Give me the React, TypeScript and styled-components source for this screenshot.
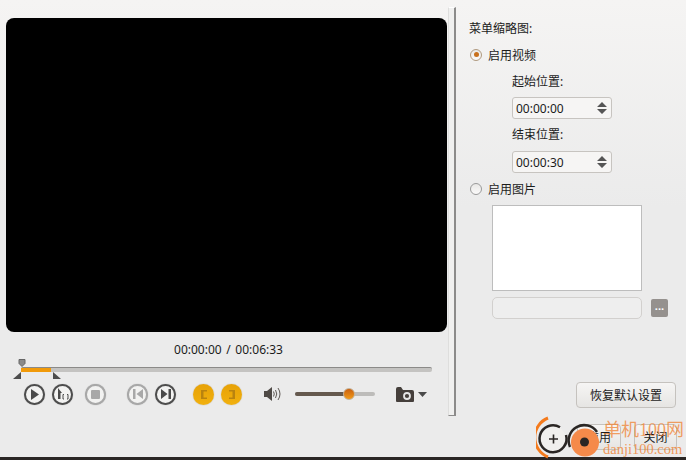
import React from 'react';
import styled, { createGlobalStyle } from 'styled-components';

const GlobalStyle = createGlobalStyle`
html, body {
  margin: 0;
  padding: 0;
  background: #ebebeb;
}
`;

const Page = styled.div`
  position: relative;
  width: 686px;
  height: 460px;
  overflow: hidden;
  background: linear-gradient(#f5f4f3, #ebebeb 45%);
  font-family: "Noto Sans", "Noto Sans CJK SC", sans-serif;
  font-size: 12px;
  color: #1c1c1c;
`;

const Main = styled.div`
  display: flex;
  height: 416px;
`;

const LeftPane = styled.div`
  width: 448px;
  padding: 18px 0 0 6px;
  box-sizing: border-box;
  flex-shrink: 0;
`;

const Video = styled.div`
  width: 441px;
  height: 314px;
  background: #000;
  border-radius: 8px;
`;

const TimeText = styled.div`
  height: 17px;
  margin-top: 9px;
  padding-left: 3px;
  text-align: center;
  line-height: 17px;
  word-spacing: 1.5px;
`;

const Track = styled.div`
  position: relative;
  height: 5px;
  width: 411px;
  margin: 9px 0 0 15px;
  background: #c4c3c1;
  border-top: 1px solid #8b8a88;
  border-radius: 2px;
  box-sizing: border-box;
`;

const TrackFill = styled.div`
  width: 30px;
  height: 4px;
  background: #f19a0a;
`;

const Marker = styled.svg<{ $top: number; $left: number }>`
  position: absolute;
  top: ${p => p.$top}px;
  left: ${p => p.$left}px;
`;

const Controls = styled.div`
  display: flex;
  align-items: center;
  height: 22px;
  margin: 11px 0 0 18px;
`;

const Round = styled.div<{ $off?: boolean; $gap?: number }>`
  width: 21px;
  height: 21px;
  margin-left: ${p => p.$gap ?? 0}px;
  border-radius: 50%;
  box-sizing: border-box;
  border: 2px solid ${p => (p.$off ? '#a8a8a8' : '#4d4d4d')};
  box-shadow: 0 0 1px rgba(0, 0, 0, 0.35);
  background: #f2f2f1;
  display: flex;
  align-items: center;
  justify-content: center;
  flex-shrink: 0;
`;

const GoldButton = styled.div<{ $gap: number }>`
  width: 21px;
  height: 21px;
  margin-left: ${p => p.$gap}px;
  border-radius: 50%;
  background: linear-gradient(#e7a207, #f1b00e);
  box-shadow: 0 0 1px rgba(120, 80, 0, 0.6);
  display: flex;
  align-items: center;
  justify-content: center;
  flex-shrink: 0;
  color: #b9830f;
`;

const Glyph = styled.svg<{ $ml?: number }>`
  margin-left: ${p => p.$ml ?? 0}px;
  flex-shrink: 0;
`;

const Volume = styled.div`
  position: relative;
  width: 80px;
  height: 4px;
  margin-left: 13px;
  background: #bdbcba;
  border-radius: 2px;
  flex-shrink: 0;
`;

const VolumeFill = styled.div`
  width: 50px;
  height: 4px;
  background: #65594e;
  border-radius: 2px;
`;

const Knob = styled.div`
  position: absolute;
  top: -4px;
  left: 48px;
  width: 12px;
  height: 12px;
  border-radius: 50%;
  background: linear-gradient(#c9600f, #f29a18);
  border: 1px solid #c4b49c;
  box-sizing: border-box;
`;

const Divider = styled.div`
  width: 8px;
  height: 409px;
  margin-top: 7px;
  box-sizing: border-box;
  background: #f0f0ef;
  border-top: 1px solid #fff;
  border-left: 1px solid #dededd;
  border-right: 2px solid #8c8b8a;
  border-bottom: 1px solid #8c8b8a;
  flex-shrink: 0;
`;

const RightPane = styled.div`
  flex: 1;
  padding: 20px 0 0 13px;
`;

const Label = styled.div`
  height: 17px;
  line-height: 17px;
`;

const RadioRow = styled.div<{ $mt: number }>`
  display: flex;
  align-items: center;
  gap: 6px;
  height: 17px;
  margin-top: ${p => p.$mt}px;
  margin-left: 1px;
`;

const Radio = styled.div<{ $on?: boolean }>`
  width: 12px;
  height: 12px;
  box-sizing: border-box;
  border-radius: 50%;
  border: 1px solid ${p => (p.$on ? '#b09a80' : '#9a9a9a')};
  background: linear-gradient(#e9e8e6, #fbfafa);
  display: flex;
  align-items: center;
  justify-content: center;
  &::after {
    content: '';
    display: ${p => (p.$on ? 'block' : 'none')};
    width: 5px;
    height: 5px;
    border-radius: 50%;
    background: #c8701c;
  }
`;

const Field = styled.div`
  margin-left: 43px;
`;

const FieldLabel = styled.div<{ $mt: number }>`
  height: 17px;
  line-height: 17px;
  margin-top: ${p => p.$mt}px;
`;

const Spin = styled.div<{ $mt: number }>`
  display: flex;
  align-items: center;
  justify-content: space-between;
  width: 100px;
  height: 22px;
  margin-top: ${p => p.$mt}px;
  padding: 0 4px 0 3px;
  box-sizing: border-box;
  border: 1px solid #c7c4c0;
  border-radius: 3px;
  background: #f6f5f4;
`;

const ImageBox = styled.div`
  width: 150px;
  height: 86px;
  margin: 8px 0 0 23px;
  background: #fff;
  border: 1px solid #bdbdbd;
  box-sizing: border-box;
`;

const PathRow = styled.div`
  display: flex;
  align-items: center;
  gap: 9px;
  margin: 6px 0 0 23px;
`;

const PathInput = styled.div`
  width: 150px;
  height: 22px;
  border: 1px solid #d2d0ce;
  border-radius: 5px;
  background: #eeeeee;
  box-sizing: border-box;
`;

const DotsButton = styled.div`
  width: 17px;
  height: 18px;
  border-radius: 2px;
  background: #95918e;
  color: #fff;
  font-size: 11px;
  font-weight: bold;
  line-height: 14px;
  text-align: center;
`;

const Button = styled.div<{ $w: number }>`
  display: flex;
  align-items: center;
  justify-content: center;
  width: ${p => p.$w}px;
  height: 26px;
  border: 1px solid #c5c2be;
  border-radius: 4px;
  background: linear-gradient(#f6f5f4, #e6e5e3);
  box-sizing: border-box;
`;

const RestoreRow = styled.div`
  display: flex;
  justify-content: flex-end;
  margin: 63px 10px 0 0;
`;

const Footer = styled.div`
  display: flex;
  justify-content: flex-end;
  gap: 13px;
  margin-top: 8px;
  padding-right: 9px;
`;

const BottomEdge = styled.div`
  position: absolute;
  left: 0;
  right: 0;
  bottom: 0;
  height: 3px;
  background: #2a2624;
`;

const WatermarkLogo = styled.svg`
  position: absolute;
  left: 536px;
  top: 414px;
`;

const WatermarkTitle = styled.div`
  position: absolute;
  left: 603px;
  top: 418px;
  font-family: "Liberation Serif", "Noto Sans CJK SC", serif;
  font-size: 18px;
  line-height: 24px;
  color: rgba(240, 130, 50, 0.75);
  white-space: nowrap;
`;

const WatermarkSite = styled.div`
  position: absolute;
  left: 603px;
  top: 441px;
  font-family: "Liberation Serif", serif;
  font-size: 14.5px;
  line-height: 17px;
  color: rgba(240, 130, 50, 0.8);
  white-space: nowrap;
`;

const Updown = () => (
  <svg width="10" height="12" viewBox="0 0 10 12">
    <path d="M5 0l5 5H0zM0 7h10l-5 5z" fill="#555" />
  </svg>
);

const Dark = '#4a4a4a';
const Off = '#a8a8a8';

export default function App() {
  return (
    <Page>
      <GlobalStyle />
      <Main>
        <LeftPane>
          <Video />
          <TimeText>00:00:00 / 00:06:33</TimeText>
          <Track>
            <TrackFill />
            <Marker $left={-3} $top={-9} width="8" height="8" viewBox="0 0 8 8">
              <path d="M1 0.500h6v4L4 7.500 1 4.500z" fill="#8a8a8a" stroke="#666" />
            </Marker>
            <Marker $left={-8} $top={4} width="8" height="7" viewBox="0 0 8 7">
              <path d="M8 0v7H0z" fill="#4d4d4d" />
            </Marker>
            <Marker $left={32} $top={4} width="8" height="7" viewBox="0 0 8 7">
              <path d="M0 0v7h8z" fill="#4d4d4d" />
            </Marker>
          </Track>
          <Controls>
            <Round>
              <svg width="8" height="11" viewBox="0 0 8 11">
                <path d="M0 0l8 5.500L0 11z" fill={Dark} />
              </svg>
            </Round>
            <Round $gap={7}>
              <svg width="12" height="12" viewBox="0 0 12 12">
                <path d="M1 0l4 5H3.500v6H1z" fill={Dark} />
                <path d="M7 6.500H6v4.500h1M10 6.500h1v4.500h-1" fill="none" stroke={Dark} />
              </svg>
            </Round>
            <Round $off $gap={12}>
              <svg width="9" height="9" viewBox="0 0 9 9">
                <rect width="9" height="9" rx="1" fill={Off} />
              </svg>
            </Round>
            <Round $off $gap={21}>
              <svg width="10" height="10" viewBox="0 0 10 10">
                <path d="M0 0h2.500v10H0zM10 0v10L3.500 5z" fill={Off} />
              </svg>
            </Round>
            <Round $gap={7}>
              <svg width="10" height="10" viewBox="0 0 10 10">
                <path d="M0 0l6.500 5L0 10zM7.500 0H10v10H7.500z" fill={Dark} />
              </svg>
            </Round>
            <GoldButton $gap={17}>
              <svg width="6" height="9" viewBox="0 0 6 9">
                <path d="M0 0h6v1.500H2.500v6H6V9H0z" fill="currentColor" />
              </svg>
            </GoldButton>
            <GoldButton $gap={7}>
              <svg width="6" height="9" viewBox="0 0 6 9">
                <path d="M6 0H0v1.500h3.500v6H0V9h6z" fill="currentColor" />
              </svg>
            </GoldButton>
            <Glyph $ml={22} width="18" height="14" viewBox="0 0 18 14">
              <path d="M0 4h3l5-4v14L3 10H0z" fill="#4f4a46" />
              <path d="M9.500 4.500q1.500 2.500 0 5M11.500 3q2.500 4 0 8M14 1q4 6 0 12" fill="none" stroke="#5f5a56" />
            </Glyph>
            <Volume>
              <VolumeFill />
              <Knob />
            </Volume>
            <Glyph $ml={21} width="18" height="15" viewBox="0 0 18 15">
              <path d="M1 15a1 1 0 0 1-1-1V2a2 2 0 0 1 2-2h3l2 3h9a2 2 0 0 1 2 2v9a1 1 0 0 1-1 1z" fill="#453f3b" />
              <circle cx="11" cy="9" r="3" fill="none" stroke="#e6e6e6" strokeWidth="1.800" />
            </Glyph>
            <Glyph $ml={4} width="9" height="5" viewBox="0 0 9 5">
              <path d="M0 0h9L4.500 5z" fill="#4a4a4a" />
            </Glyph>
          </Controls>
        </LeftPane>
        <Divider />
        <RightPane>
          <Label>菜单缩略图:</Label>
          <RadioRow $mt={9}>
            <Radio $on />
            <span>启用视频</span>
          </RadioRow>
          <Field>
            <FieldLabel $mt={10}>起始位置:</FieldLabel>
            <Spin $mt={7}>
              <span>00:00:00</span>
              <Updown />
            </Spin>
            <FieldLabel $mt={7}>结束位置:</FieldLabel>
            <Spin $mt={8}>
              <span>00:00:30</span>
              <Updown />
            </Spin>
          </Field>
          <RadioRow $mt={7}>
            <Radio />
            <span>启用图片</span>
          </RadioRow>
          <ImageBox />
          <PathRow>
            <PathInput />
            <DotsButton>...</DotsButton>
          </PathRow>
          <RestoreRow>
            <Button $w={100}>恢复默认设置</Button>
          </RestoreRow>
        </RightPane>
      </Main>
      <Footer>
        <Button $w={44}>应用</Button>
        <Button $w={43}>关闭</Button>
      </Footer>
      <BottomEdge />
      <WatermarkLogo width="66" height="46" viewBox="0 0 66 46">
        <path d="M12 4A21 21 0 0 0 12 43" fill="none" stroke="#f47a1c" strokeWidth="3" />
        <path d="M24 13.200A13.500 13.500 0 1 0 30 21" fill="#f0efed" stroke="#2a2624" strokeWidth="2.500" />
        <path d="M17.500 20.500v9M13 25h9" stroke="#2a2624" strokeWidth="1.600" />
        <path d="M34 33a15.500 15.500 0 0 1 27-15" fill="none" stroke="#2a2624" strokeWidth="2.500" />
        <circle cx="49" cy="28.500" r="14" fill="#f58a4a" />
        <circle cx="48.500" cy="28" r="4.500" fill="#2a2624" />
      </WatermarkLogo>
      <WatermarkTitle>单机100网</WatermarkTitle>
      <WatermarkSite>danji100.com</WatermarkSite>
    </Page>
  );
}
